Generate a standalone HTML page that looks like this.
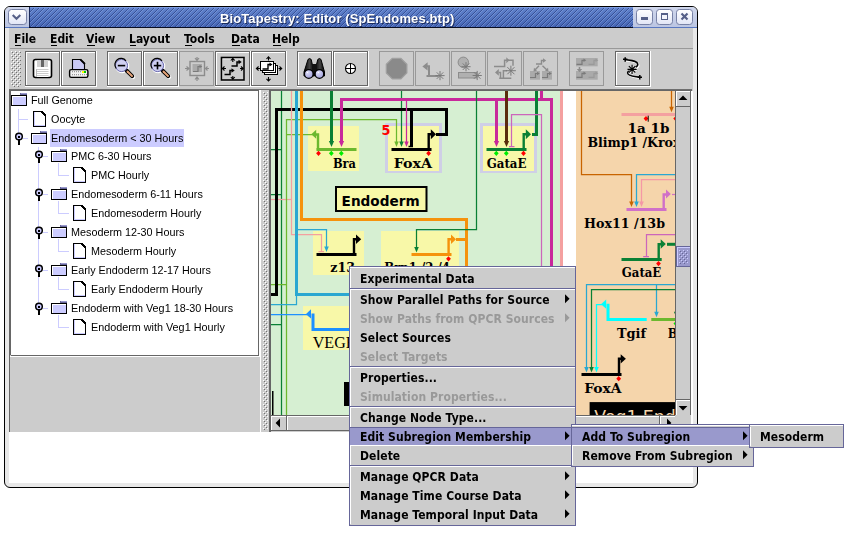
<!DOCTYPE html><html><head><meta charset="utf-8"><title>BioTapestry: Editor (SpEndomes.btp)</title><style>
html,body{margin:0;padding:0;background:#fff;}
body{width:858px;height:537px;overflow:hidden;position:relative;font-family:"Liberation Sans","DejaVu Sans",sans-serif;}
.abs{position:absolute;}
.menubar span,.tree span,.mi span,#ttext span{will-change:transform;}
#win{position:absolute;left:4px;top:6px;width:692px;height:480px;border:1px solid #000;border-radius:6px 6px 6px 6px;background:#e8e8e8;overflow:hidden;}
#content{position:absolute;left:4px;top:21px;width:684px;height:404px;background:#ccc;}
#below{position:absolute;left:4px;top:425px;width:684px;height:51px;background:#fff;}
#title{position:absolute;left:0;top:0;width:692px;height:20px;background:linear-gradient(#d0d7ec,#bcc6e2);}
#stripes{position:absolute;left:24px;top:0;width:603px;height:20px;background:linear-gradient(#6183cc,#4666b4);overflow:hidden;border-left:1px solid #1a2a5a;}
#titleline{position:absolute;left:0;top:20px;width:692px;height:1px;background:#5a78c0;}
#titleline2{position:absolute;left:24px;top:20px;width:604px;height:1px;background:#0a0f24;}
#ttext{position:absolute;left:0;top:0;width:692px;height:20px;color:#fff;font:bold 13px/15px "Liberation Sans",sans-serif;letter-spacing:0.1px;text-shadow:1px 1px 0 #1c2c5c;white-space:nowrap;}
.tbtn{position:absolute;top:2px;width:15px;height:14px;border:1px solid #7882a6;border-radius:3.5px;background:linear-gradient(#ffffff,#e2e6f6);}
.tbtn svg{position:absolute;left:0;top:0;}
.menubar span{position:absolute;top:31px;height:16px;font:bold 12px/16px "DejaVu Sans Condensed","DejaVu Sans",sans-serif;color:#000;white-space:nowrap;}
.menubar u{text-decoration:none;}
.menubar i{position:absolute;left:0;top:14px;height:1px;background:#000;}
.tb{position:absolute;top:51px;width:35px;height:35px;border:1px solid #666;box-shadow:1px 1px 0 #fff, inset 1px 1px 0 #fff;box-sizing:border-box;}
.tb.dis{border-color:#999;}
.tree span{position:absolute;height:19px;font:10.8px/19px "Liberation Sans",sans-serif;color:#000;white-space:nowrap;}
.menu{position:absolute;background:#ccc;border:1px solid #666699;box-sizing:border-box;}
.mi{position:absolute;left:0;height:19px;box-sizing:border-box;border-left:1px solid #fff;font:bold 12px "DejaVu Sans Condensed","DejaVu Sans",sans-serif;letter-spacing:0.08px;color:#000;white-space:nowrap;}
.mi span{position:absolute;left:8.5px;top:1px;line-height:19px;}
.mi.dis{color:#999;}
.mi.sel{background:#9999cc;border-left:0;border-top:1px solid #666699;border-bottom:1px solid #fff;}
.mi.sel span{left:9.5px;top:0px;}
.sep{position:absolute;left:0;height:2px;border-top:1px solid #666699;border-bottom:1px solid #fff;box-sizing:border-box;}
.arr{position:absolute;width:0;height:0;border-left:4.8px solid #000;border-top:4.8px solid transparent;border-bottom:4.8px solid transparent;}
.dis .arr{border-left-color:#999;}
</style></head><body>
<div id="win"><div id="title"></div><div id="stripes"><svg width="603" height="20" shape-rendering="crispEdges"><defs><pattern id="st" width="5" height="5" patternUnits="userSpaceOnUse"><rect x="4" y="0" width="1" height="1" fill="#16286a" fill-opacity="0.5"/><rect x="0" y="0" width="1" height="1" fill="#b0c8ff" fill-opacity="0.3"/><rect x="3" y="1" width="1" height="1" fill="#16286a" fill-opacity="0.5"/><rect x="4" y="1" width="1" height="1" fill="#b0c8ff" fill-opacity="0.3"/><rect x="2" y="2" width="1" height="1" fill="#16286a" fill-opacity="0.5"/><rect x="3" y="2" width="1" height="1" fill="#b0c8ff" fill-opacity="0.3"/><rect x="1" y="3" width="1" height="1" fill="#16286a" fill-opacity="0.5"/><rect x="2" y="3" width="1" height="1" fill="#b0c8ff" fill-opacity="0.3"/><rect x="0" y="4" width="1" height="1" fill="#16286a" fill-opacity="0.5"/><rect x="1" y="4" width="1" height="1" fill="#b0c8ff" fill-opacity="0.3"/></pattern></defs><rect width="603" height="20" fill="url(#st)"/><rect width="603" height="1" fill="#7c9be2"/></svg></div><div id="titleline"></div><div id="titleline2"></div><div id="ttext"><span style="position:absolute;left:215px;top:4px">BioTapestry: Editor (SpEndomes.btp)</span></div><div class="tbtn" style="left:3px;width:17px"><svg width="17" height="14"><path d="M3.7 5 L7.5 8.8 L11.3 5" stroke="#566088" stroke-width="2.1" fill="none"/></svg></div><div class="tbtn" style="left:631px"><svg width="15" height="14"><rect x="4" y="7" width="7" height="3" fill="#566088"/></svg></div><div class="tbtn" style="left:651px"><svg width="15" height="14"><rect x="4" y="3" width="7" height="7" fill="#566088"/><rect x="5" y="5" width="5" height="4" fill="#f4f5fc"/></svg></div><div class="tbtn" style="left:671px"><svg width="15" height="14"><path d="M4.5 3.5 L10.5 9.5 M10.5 3.5 L4.5 9.5" stroke="#566088" stroke-width="2.2" fill="none"/></svg></div><div id="content"></div><div id="below"></div></div>
<div class="abs" style="left:10px;top:48px;width:683px;height:1px;background:#999"></div>
<div class="menubar"><span style="left:14px;top:31px"><u>F</u>ile<i style="left:1px;top:14px;width:6px"></i></span><span style="left:50px;top:31px"><u>E</u>dit<i style="left:1px;top:14px;width:6px"></i></span><span style="left:86px;top:31px"><u>V</u>iew<i style="left:1px;top:14px;width:8px"></i></span><span style="left:129px;top:31px"><u>L</u>ayout<i style="left:1px;top:14px;width:6px"></i></span><span style="left:184px;top:31px"><u>T</u>ools<i style="left:1px;top:14px;width:7px"></i></span><span style="left:231px;top:31px"><u>D</u>ata<i style="left:1px;top:14px;width:8px"></i></span><span style="left:272px;top:31px"><u>H</u>elp<i style="left:1px;top:14px;width:8px"></i></span></div>
<div class="abs" style="left:26px;top:52px;width:33px;height:1px;background:#fff"></div><div class="abs" style="left:26px;top:52px;width:1px;height:33px;background:#fff"></div><div class="abs" style="left:60px;top:51px;width:1px;height:36px;background:#fff"></div><div class="abs" style="left:25px;top:86px;width:36px;height:1px;background:#fff"></div><div class="abs" style="left:25px;top:51px;width:33px;height:33px;border:1px solid #666"></div><svg class="abs" style="left:25px;top:51px" width="36" height="36"><rect x="8.5" y="8.5" width="18" height="18" rx="2" fill="#fff" stroke="#000" stroke-width="1.6"/><g shape-rendering="crispEdges"><rect x="12" y="9" width="11" height="7" fill="#d0d0d0"/><rect x="16" y="9" width="3" height="7" fill="#666"/></g><rect x="12" y="18.5" width="11.5" height="7.5" fill="#fff"/><path d="M12 18.5H23.5M12 20.5H23.5M12 22.5H23.5M12 24.5H23.5" stroke="#ccc" stroke-width="1"/><path d="M11.5 18V26" stroke="#bbb" stroke-width="1"/></svg><div class="abs" style="left:62px;top:52px;width:33px;height:1px;background:#fff"></div><div class="abs" style="left:62px;top:52px;width:1px;height:33px;background:#fff"></div><div class="abs" style="left:96px;top:51px;width:1px;height:36px;background:#fff"></div><div class="abs" style="left:61px;top:86px;width:36px;height:1px;background:#fff"></div><div class="abs" style="left:61px;top:51px;width:33px;height:33px;border:1px solid #666"></div><svg class="abs" style="left:61px;top:51px" width="36" height="36"><path d="M11.5 18.5V8.5H19.5L23.5 12.5V18.5Z" fill="#cacaf4" stroke="#000" stroke-width="1.1"/><path d="M19.3 8.3L23.9 13" stroke="#000" stroke-width="1.8"/><rect x="8.6" y="18.6" width="18.3" height="7.8" rx="1.6" fill="#f2f2f2" stroke="#000" stroke-width="1.4"/><path d="M10.5 20.5H20.5M10.5 23.5H25.5" stroke="#9a9a9a" stroke-width="1" stroke-dasharray="1 1" shape-rendering="crispEdges"/><path d="M11 21.5H20M11 24.5H25" stroke="#d8d8d8" stroke-width="1" stroke-dasharray="1 1" shape-rendering="crispEdges"/><rect x="21" y="20" width="2" height="2" fill="#ffff00" shape-rendering="crispEdges"/><rect x="23" y="20" width="2" height="2" fill="#00cc00" shape-rendering="crispEdges"/></svg><div class="abs" style="left:108px;top:52px;width:33px;height:1px;background:#fff"></div><div class="abs" style="left:108px;top:52px;width:1px;height:33px;background:#fff"></div><div class="abs" style="left:142px;top:51px;width:1px;height:36px;background:#fff"></div><div class="abs" style="left:107px;top:86px;width:36px;height:1px;background:#fff"></div><div class="abs" style="left:107px;top:51px;width:33px;height:33px;border:1px solid #666"></div><svg class="abs" style="left:107px;top:51px" width="36" height="36"><path d="M20 20L25.3 25.3" stroke="#fff" stroke-width="4.2" stroke-linecap="round" transform="translate(0.8,0.8)"/><circle cx="15.2" cy="15.2" r="6.3" fill="none" stroke="#fff" stroke-width="1.5"/><path d="M19.5 19.5L25.2 25.2" stroke="#000" stroke-width="4" stroke-linecap="round"/><path d="M20.5 20.5L25 25" stroke="#e6a47a" stroke-width="1.9" stroke-linecap="round"/><circle cx="14.5" cy="14.5" r="6.1" fill="#cfcff0" stroke="#5a5aa8" stroke-width="0.9"/><path d="M9.2 17.5A6.1 6.1 0 0 1 19 9.8" fill="none" stroke="#000" stroke-width="1.2"/><rect x="10.8" y="13.8" width="7.4" height="1.6" fill="#000"/></svg><div class="abs" style="left:144px;top:52px;width:33px;height:1px;background:#fff"></div><div class="abs" style="left:144px;top:52px;width:1px;height:33px;background:#fff"></div><div class="abs" style="left:178px;top:51px;width:1px;height:36px;background:#fff"></div><div class="abs" style="left:143px;top:86px;width:36px;height:1px;background:#fff"></div><div class="abs" style="left:143px;top:51px;width:33px;height:33px;border:1px solid #666"></div><svg class="abs" style="left:143px;top:51px" width="36" height="36"><path d="M20 20L25.3 25.3" stroke="#fff" stroke-width="4.2" stroke-linecap="round" transform="translate(0.8,0.8)"/><circle cx="15.2" cy="15.2" r="6.3" fill="none" stroke="#fff" stroke-width="1.5"/><path d="M19.5 19.5L25.2 25.2" stroke="#000" stroke-width="4" stroke-linecap="round"/><path d="M20.5 20.5L25 25" stroke="#e6a47a" stroke-width="1.9" stroke-linecap="round"/><circle cx="14.5" cy="14.5" r="6.1" fill="#cfcff0" stroke="#5a5aa8" stroke-width="0.9"/><path d="M9.2 17.5A6.1 6.1 0 0 1 19 9.8" fill="none" stroke="#000" stroke-width="1.2"/><rect x="10.8" y="13.8" width="7.4" height="1.6" fill="#000"/><rect x="13.7" y="10.8" width="1.6" height="7.6" fill="#000"/></svg><div class="abs" style="left:179px;top:51px;width:33px;height:33px;border:1px solid #999"></div><svg class="abs" style="left:179px;top:51px" width="36" height="36"><rect x="11" y="10.5" width="14.5" height="14" fill="none" stroke="#8c8c8c" stroke-width="1.4"/><rect x="13.5" y="13" width="9.5" height="8" fill="#aaa"/><path d="M14 20.5H19V15.5H21" stroke="#7a7a7a" stroke-width="1.2" fill="none"/><polygon points="20.5,13.7 23.3,15.5 20.5,17.3" fill="#7a7a7a"/><path d="M18 6V9.5M16 7L18 9.5L20 7 M18 30V26M16 28.5L18 26L20 28.5 M6 17.5H10M7.5 15.5L10 17.5L7.5 19.5 M30 17.5H26.5M28.5 15.5L26.5 17.5L28.5 19.5" stroke="#8c8c8c" stroke-width="1.2" fill="none"/></svg><div class="abs" style="left:216px;top:52px;width:33px;height:1px;background:#fff"></div><div class="abs" style="left:216px;top:52px;width:1px;height:33px;background:#fff"></div><div class="abs" style="left:250px;top:51px;width:1px;height:36px;background:#fff"></div><div class="abs" style="left:215px;top:86px;width:36px;height:1px;background:#fff"></div><div class="abs" style="left:215px;top:51px;width:33px;height:33px;border:1px solid #666"></div><svg class="abs" style="left:215px;top:51px" width="36" height="36"><rect x="7" y="7.5" width="22" height="22" fill="none" stroke="#fff" stroke-width="1.5"/><rect x="6.5" y="6.5" width="22.5" height="22.5" fill="none" stroke="#000" stroke-width="1.6"/><path d="M16.5 15H22.0V11H24.0" stroke="#000" stroke-width="1.5" fill="none"/><polygon points="23.5,8.8 26.7,11 23.5,13.2" fill="#000"/><path d="M9.5 23.5H15.0V19.5H17.0" stroke="#000" stroke-width="1.5" fill="none"/><polygon points="16.5,17.3 19.7,19.5 16.5,21.7" fill="#000"/><path d="M17.8 11V7.5M15.8 9.5L17.8 7.3L19.8 9.5 M17.8 25V28M15.8 26L17.8 28.2L19.8 26 M11 17.5H7.5M9.5 15.5L7.3 17.5L9.5 19.5 M25 17.5H28M26 15.5L28.2 17.5L26 19.5" stroke="#000" stroke-width="1.1" fill="none"/></svg><div class="abs" style="left:252px;top:52px;width:33px;height:1px;background:#fff"></div><div class="abs" style="left:252px;top:52px;width:1px;height:33px;background:#fff"></div><div class="abs" style="left:286px;top:51px;width:1px;height:36px;background:#fff"></div><div class="abs" style="left:251px;top:86px;width:36px;height:1px;background:#fff"></div><div class="abs" style="left:251px;top:51px;width:33px;height:33px;border:1px solid #666"></div><svg class="abs" style="left:251px;top:51px" width="36" height="36"><g shape-rendering="crispEdges"><rect x="13.5" y="14.5" width="13" height="9" fill="#fff" stroke="#000" stroke-width="1"/><rect x="11.5" y="12.5" width="13" height="9" fill="#fff" stroke="#000" stroke-width="1"/><rect x="9.5" y="10.5" width="13" height="9" fill="#fff" stroke="#000" stroke-width="1"/></g><path d="M11.5 18H17.0V13.5H19.0" stroke="#000" stroke-width="1.4" fill="none"/><polygon points="18.5,11.5 21.5,13.5 18.5,15.5" fill="#000"/><path d="M17.5 9.5V6M15.5 8L17.5 5.8L19.5 8 M17.5 26V29.5M15.5 27.8L17.5 30L19.5 27.8 M9 17.5H5.5M7.6 15.5L5.4 17.5L7.6 19.5 M27.5 17.5H30.5M28.5 15.5L30.7 17.5L28.5 19.5" stroke="#000" stroke-width="1.1" fill="none"/></svg><div class="abs" style="left:298px;top:52px;width:33px;height:1px;background:#fff"></div><div class="abs" style="left:298px;top:52px;width:1px;height:33px;background:#fff"></div><div class="abs" style="left:332px;top:51px;width:1px;height:36px;background:#fff"></div><div class="abs" style="left:297px;top:86px;width:36px;height:1px;background:#fff"></div><div class="abs" style="left:297px;top:51px;width:33px;height:33px;border:1px solid #666"></div><svg class="abs" style="left:297px;top:51px" width="36" height="36"><defs><linearGradient id="bn" x1="0" x2="1"><stop offset="0" stop-color="#000"/><stop offset="0.55" stop-color="#444"/><stop offset="1" stop-color="#000"/></linearGradient><radialGradient id="ln" cx="0.35" cy="0.3" r="0.8"><stop offset="0" stop-color="#e0e0fa"/><stop offset="1" stop-color="#9c9cd8"/></radialGradient></defs><path d="M11 8.5Q12.6 6.5 14.2 8.5L17 21V25H7V21Z" fill="url(#bn)" stroke="#000" stroke-width="1"/><path d="M20.8 8.5Q22.4 6.5 24 8.5L27.5 21V25H17.5V21Z" fill="url(#bn)" stroke="#000" stroke-width="1"/><rect x="15" y="13" width="5" height="9" fill="#111"/><circle cx="11.8" cy="23" r="4.3" fill="url(#ln)" stroke="#000" stroke-width="1.2"/><circle cx="22.4" cy="23" r="4.3" fill="url(#ln)" stroke="#000" stroke-width="1.2"/><rect x="10" y="21" width="1" height="1" fill="#fff"/><rect x="21" y="21" width="1" height="1" fill="#fff"/></svg><div class="abs" style="left:334px;top:52px;width:33px;height:1px;background:#fff"></div><div class="abs" style="left:334px;top:52px;width:1px;height:33px;background:#fff"></div><div class="abs" style="left:368px;top:51px;width:1px;height:36px;background:#fff"></div><div class="abs" style="left:333px;top:86px;width:36px;height:1px;background:#fff"></div><div class="abs" style="left:333px;top:51px;width:33px;height:33px;border:1px solid #666"></div><svg class="abs" style="left:333px;top:51px" width="36" height="36"><circle cx="17.5" cy="17.5" r="5" fill="#fff" stroke="#000" stroke-width="1.1"/><path d="M12.5 17.5H22.5M17.5 12.5V22.5" stroke="#000" stroke-width="1"/></svg><div class="abs" style="left:379px;top:51px;width:33px;height:33px;border:1px solid #999"></div><svg class="abs" style="left:379px;top:51px" width="36" height="36"><polygon points="27.9,21.9 21.9,27.9 13.3,27.9 7.3,21.9 7.3,13.3 13.3,7.3 21.9,7.3 27.9,13.3" fill="#8a8a8a" stroke="#a0a0a0" stroke-width="1.2"/></svg><div class="abs" style="left:415px;top:51px;width:33px;height:33px;border:1px solid #999"></div><svg class="abs" style="left:415px;top:51px" width="36" height="36"><path d="M11.5 25H23.5M14 25V15.3H12" stroke="#8c8c8c" stroke-width="2" fill="none"/><polygon points="7.4,15.4 12.6,11.2 12.6,19.6" fill="#8c8c8c"/><path d="M20.40 24.60L29.60 24.60M21.75 21.35L28.25 27.85M25.00 20.00L25.00 29.20M28.25 21.35L21.75 27.85" stroke="#7a7a7a" stroke-width="1" fill="none"/></svg><div class="abs" style="left:451px;top:51px;width:33px;height:33px;border:1px solid #999"></div><svg class="abs" style="left:451px;top:51px" width="36" height="36"><circle cx="12.3" cy="11.3" r="5.2" fill="#b0b0b0" stroke="#8c8c8c" stroke-width="1"/><rect x="7.5" y="21.5" width="18" height="5.5" fill="#b0b0b0" stroke="#8c8c8c" stroke-width="1"/><path d="M10.40 15.70L19.60 15.70M11.75 12.45L18.25 18.95M15.00 11.10L15.00 20.30M18.25 12.45L11.75 18.95" stroke="#7a7a7a" stroke-width="1" fill="none"/><path d="M21.60 24.50L30.80 24.50M22.95 21.25L29.45 27.75M26.20 19.90L26.20 29.10M29.45 21.25L22.95 27.75" stroke="#7a7a7a" stroke-width="1" fill="none"/></svg><div class="abs" style="left:487px;top:51px;width:33px;height:33px;border:1px solid #999"></div><svg class="abs" style="left:487px;top:51px" width="36" height="36"><path d="M7 15.5H17.6V9.3H26V14.8 M12 21.4H13.5V27.3 M12.2 27.3H24.3 M16.4 27.3V19.7H20" stroke="#8c8c8c" stroke-width="1.5" fill="none"/><polygon points="19.3,6.3 22.4,9.3 19.3,12.3" fill="#8c8c8c"/><polygon points="8,21.4 11.8,18 11.8,24.8" fill="#8c8c8c"/><path d="M18.90 19.70L28.90 19.70M20.36 16.16L27.44 23.24M23.90 14.70L23.90 24.70M27.44 16.16L20.36 23.24" stroke="#7a7a7a" stroke-width="1" fill="none"/></svg><div class="abs" style="left:523px;top:51px;width:33px;height:33px;border:1px solid #999"></div><svg class="abs" style="left:523px;top:51px" width="36" height="36"><rect x="7" y="20" width="10" height="8.7" fill="#aaa"/><rect x="19" y="20" width="10" height="8.7" fill="#aaa"/><path d="M13 13H18.5V9.5H20.5" stroke="#8c8c8c" stroke-width="1.4" fill="none"/><polygon points="20.0,7.3 23.2,9.5 20.0,11.7" fill="#8c8c8c"/><path d="M7 26.5H12.5V22.5H14.5" stroke="#7a7a7a" stroke-width="1.2" fill="none"/><polygon points="14.0,20.7 16.8,22.5 14.0,24.3" fill="#7a7a7a"/><path d="M19 26.5H24.5V22.5H26.5" stroke="#7a7a7a" stroke-width="1.2" fill="none"/><polygon points="26.0,20.7 28.8,22.5 26.0,24.3" fill="#7a7a7a"/><path d="M16 14.8L11.5 19.5M19.5 14.8L24.5 19.5" stroke="#8c8c8c" stroke-width="1.4"/><polygon points="10.5,20.5 11,16.8 14,19.8" fill="#8c8c8c"/><polygon points="25.5,20.5 25,16.8 22,19.8" fill="#8c8c8c"/></svg><div class="abs" style="left:569px;top:51px;width:33px;height:33px;border:1px solid #999"></div><svg class="abs" style="left:569px;top:51px" width="36" height="36"><rect x="7" y="7" width="21.7" height="8.3" fill="#aaa"/><rect x="7" y="20" width="21.7" height="8.7" fill="#aaa"/><path d="M7.5 13.3H13.0V9.3H15.0" stroke="#7a7a7a" stroke-width="1.2" fill="none"/><polygon points="14.5,7.500000000000001 17.3,9.3 14.5,11.100000000000001" fill="#7a7a7a"/><path d="M19.5 13.3H25.0V9.3H27.0" stroke="#999" stroke-width="1.2" fill="none"/><polygon points="26.5,7.500000000000001 29.3,9.3 26.5,11.100000000000001" fill="#999"/><path d="M7.5 26.3H13.0V22.3H15.0" stroke="#7a7a7a" stroke-width="1.2" fill="none"/><polygon points="14.5,20.5 17.3,22.3 14.5,24.1" fill="#7a7a7a"/><path d="M19.5 26.3H25.0V22.3H27.0" stroke="#999" stroke-width="1.2" fill="none"/><polygon points="26.5,20.5 29.3,22.3 26.5,24.1" fill="#999"/><path d="M10.5 16V19" stroke="#8c8c8c" stroke-width="1.6"/><polygon points="7.8,18 13.2,18 10.5,21.3" fill="#8c8c8c"/></svg><div class="abs" style="left:616px;top:52px;width:33px;height:1px;background:#fff"></div><div class="abs" style="left:616px;top:52px;width:1px;height:33px;background:#fff"></div><div class="abs" style="left:650px;top:51px;width:1px;height:36px;background:#fff"></div><div class="abs" style="left:615px;top:86px;width:36px;height:1px;background:#fff"></div><div class="abs" style="left:615px;top:51px;width:33px;height:33px;border:1px solid #666"></div><svg class="abs" style="left:615px;top:51px" width="36" height="36"><path d="M10 8.6C16 9.5 22.5 9.5 22.8 13.5C23 17.5 12.3 17.8 12.6 22C13 25.5 20 25.3 24.8 26.3" stroke="#fff" stroke-width="1.6" fill="none" transform="translate(1,1)"/><path d="M10 8.6C16 9.5 22.5 9.5 22.8 13.5C23 17.5 12.3 17.8 12.6 22C13 25.5 20 25.3 24.8 26.3" stroke="#000" stroke-width="1.5" fill="none"/><path d="M8 8.2H12.4M10.2 6.2V10.8M22.6 26.2H27M24.8 24V28.5" stroke="#000" stroke-width="1.5"/><path d="M13.20 19.00L22.00 19.00M14.49 15.89L20.71 22.11M17.60 14.60L17.60 23.40M20.71 15.89L14.49 22.11" stroke="#fff" stroke-width="1.2" fill="none"/><path d="M12.50 18.40L21.70 18.40M13.85 15.15L20.35 21.65M17.10 13.80L17.10 23.00M20.35 15.15L13.85 21.65" stroke="#000" stroke-width="1.15" fill="none"/></svg>
<div class="abs" style="left:9px;top:90px;width:1px;height:342px;background:#666"></div><div class="abs" style="left:9px;top:89px;width:683px;height:1px;background:#6e6e6e"></div><div class="abs" style="left:10px;top:90px;width:249px;height:266px;background:#666"></div><div class="abs" style="left:11px;top:91px;width:247px;height:264px;background:#fff"></div><div class="abs" style="left:259px;top:90px;width:1px;height:267px;background:#fff"></div><div class="abs" style="left:260px;top:90px;width:1px;height:342px;background:#fff"></div><div class="abs" style="left:10px;top:356px;width:250px;height:1px;background:#fff"></div><div class="abs" style="left:10px;top:355px;width:1px;height:1px;background:#ccc"></div><svg class="abs" style="left:263px;top:92px" width="5" height="338" shape-rendering="crispEdges"><defs><pattern id="bd" width="4" height="4" patternUnits="userSpaceOnUse"><rect x="0" y="0" width="1" height="1" fill="#fff"/><rect x="1" y="1" width="1" height="1" fill="#707070"/><rect x="2" y="2" width="1" height="1" fill="#fff"/><rect x="3" y="3" width="1" height="1" fill="#707070"/></pattern></defs><rect width="5" height="338" fill="url(#bd)"/></svg><svg class="abs" style="left:11px;top:51px" width="10" height="36" shape-rendering="crispEdges"><defs><pattern id="bg" width="4" height="4" patternUnits="userSpaceOnUse"><rect x="0" y="0" width="1" height="1" fill="#fff"/><rect x="1" y="1" width="1" height="1" fill="#707070"/><rect x="2" y="2" width="1" height="1" fill="#fff"/><rect x="3" y="3" width="1" height="1" fill="#707070"/></pattern></defs><rect width="10" height="36" fill="url(#bg)"/></svg><div class="abs" style="left:269px;top:90px;width:1px;height:342px;background:#666"></div><div class="abs" style="left:270px;top:90px;width:422px;height:342px;background:#666"></div><div class="abs" style="left:271px;top:91px;width:422px;height:341px;background:#ccc"></div><div class="abs" style="left:691px;top:91px;width:2px;height:341px;background:#fff"></div>
<svg class="abs" style="left:0;top:0" width="270" height="360" shape-rendering="crispEdges"><rect x="18" y="109" width="1" height="24" fill="#ccccff"/><rect x="18" y="119" width="10" height="1" fill="#ccccff"/><rect x="38" y="147" width="1" height="156" fill="#ccccff"/><rect x="20" y="93" width="7" height="3" fill="#666699"/><rect x="21" y="93" width="6" height="1" fill="#9999cc"/><rect x="11.5" y="95.5" width="15" height="10" fill="#ccccff" stroke="#000" stroke-width="1"/><rect x="12" y="96" width="14" height="1" fill="#fff"/><rect x="12" y="96" width="1" height="9" fill="#fff"/><path d="M33.5 111.5 H41.5 L45.5 115.5 V126.5 H33.5 Z" fill="#fff" stroke="#000" stroke-width="1"/><path d="M41.5 111.5 L45.5 115.5" stroke="#000" stroke-width="2" fill="none"/><rect x="34" y="112" width="1" height="14" fill="#ccccff"/><rect x="34" y="125" width="11" height="1" fill="#ccccff"/><rect x="50" y="129" width="134" height="18" fill="#ccccff"/><rect x="23" y="138" width="5" height="1" fill="#ccccff"/><circle cx="19" cy="136.5" r="3.3" fill="#ccccff" stroke="#000" stroke-width="1.5" shape-rendering="auto"/><rect x="18" y="135.5" width="2" height="2" fill="#000"/><rect x="18" y="140" width="2" height="5" fill="#000"/><rect x="40" y="131" width="7" height="3" fill="#666699"/><rect x="41" y="131" width="6" height="1" fill="#9999cc"/><rect x="31.5" y="133.5" width="15" height="10" fill="#ccccff" stroke="#000" stroke-width="1"/><rect x="32" y="134" width="14" height="1" fill="#fff"/><rect x="32" y="134" width="1" height="9" fill="#fff"/><rect x="43" y="156" width="5" height="1" fill="#ccccff"/><circle cx="39" cy="154.5" r="3.3" fill="#ccccff" stroke="#000" stroke-width="1.5" shape-rendering="auto"/><rect x="38" y="153.5" width="2" height="2" fill="#000"/><rect x="38" y="158" width="2" height="5" fill="#000"/><rect x="60" y="149" width="7" height="3" fill="#666699"/><rect x="61" y="149" width="6" height="1" fill="#9999cc"/><rect x="51.5" y="151.5" width="15" height="10" fill="#ccccff" stroke="#000" stroke-width="1"/><rect x="52" y="152" width="14" height="1" fill="#fff"/><rect x="52" y="152" width="1" height="9" fill="#fff"/><rect x="58" y="163" width="1" height="13" fill="#ccccff"/><rect x="58" y="175" width="11" height="1" fill="#ccccff"/><path d="M73.5 167.5 H81.5 L85.5 171.5 V182.5 H73.5 Z" fill="#fff" stroke="#000" stroke-width="1"/><path d="M81.5 167.5 L85.5 171.5" stroke="#000" stroke-width="2" fill="none"/><rect x="74" y="168" width="1" height="14" fill="#ccccff"/><rect x="74" y="181" width="11" height="1" fill="#ccccff"/><rect x="43" y="194" width="5" height="1" fill="#ccccff"/><circle cx="39" cy="192.5" r="3.3" fill="#ccccff" stroke="#000" stroke-width="1.5" shape-rendering="auto"/><rect x="38" y="191.5" width="2" height="2" fill="#000"/><rect x="38" y="196" width="2" height="5" fill="#000"/><rect x="60" y="187" width="7" height="3" fill="#666699"/><rect x="61" y="187" width="6" height="1" fill="#9999cc"/><rect x="51.5" y="189.5" width="15" height="10" fill="#ccccff" stroke="#000" stroke-width="1"/><rect x="52" y="190" width="14" height="1" fill="#fff"/><rect x="52" y="190" width="1" height="9" fill="#fff"/><rect x="58" y="201" width="1" height="13" fill="#ccccff"/><rect x="58" y="213" width="11" height="1" fill="#ccccff"/><path d="M73.5 205.5 H81.5 L85.5 209.5 V220.5 H73.5 Z" fill="#fff" stroke="#000" stroke-width="1"/><path d="M81.5 205.5 L85.5 209.5" stroke="#000" stroke-width="2" fill="none"/><rect x="74" y="206" width="1" height="14" fill="#ccccff"/><rect x="74" y="219" width="11" height="1" fill="#ccccff"/><rect x="43" y="232" width="5" height="1" fill="#ccccff"/><circle cx="39" cy="230.5" r="3.3" fill="#ccccff" stroke="#000" stroke-width="1.5" shape-rendering="auto"/><rect x="38" y="229.5" width="2" height="2" fill="#000"/><rect x="38" y="234" width="2" height="5" fill="#000"/><rect x="60" y="225" width="7" height="3" fill="#666699"/><rect x="61" y="225" width="6" height="1" fill="#9999cc"/><rect x="51.5" y="227.5" width="15" height="10" fill="#ccccff" stroke="#000" stroke-width="1"/><rect x="52" y="228" width="14" height="1" fill="#fff"/><rect x="52" y="228" width="1" height="9" fill="#fff"/><rect x="58" y="239" width="1" height="13" fill="#ccccff"/><rect x="58" y="251" width="11" height="1" fill="#ccccff"/><path d="M73.5 243.5 H81.5 L85.5 247.5 V258.5 H73.5 Z" fill="#fff" stroke="#000" stroke-width="1"/><path d="M81.5 243.5 L85.5 247.5" stroke="#000" stroke-width="2" fill="none"/><rect x="74" y="244" width="1" height="14" fill="#ccccff"/><rect x="74" y="257" width="11" height="1" fill="#ccccff"/><rect x="43" y="270" width="5" height="1" fill="#ccccff"/><circle cx="39" cy="268.5" r="3.3" fill="#ccccff" stroke="#000" stroke-width="1.5" shape-rendering="auto"/><rect x="38" y="267.5" width="2" height="2" fill="#000"/><rect x="38" y="272" width="2" height="5" fill="#000"/><rect x="60" y="263" width="7" height="3" fill="#666699"/><rect x="61" y="263" width="6" height="1" fill="#9999cc"/><rect x="51.5" y="265.5" width="15" height="10" fill="#ccccff" stroke="#000" stroke-width="1"/><rect x="52" y="266" width="14" height="1" fill="#fff"/><rect x="52" y="266" width="1" height="9" fill="#fff"/><rect x="58" y="277" width="1" height="13" fill="#ccccff"/><rect x="58" y="289" width="11" height="1" fill="#ccccff"/><path d="M73.5 281.5 H81.5 L85.5 285.5 V296.5 H73.5 Z" fill="#fff" stroke="#000" stroke-width="1"/><path d="M81.5 281.5 L85.5 285.5" stroke="#000" stroke-width="2" fill="none"/><rect x="74" y="282" width="1" height="14" fill="#ccccff"/><rect x="74" y="295" width="11" height="1" fill="#ccccff"/><rect x="43" y="308" width="5" height="1" fill="#ccccff"/><circle cx="39" cy="306.5" r="3.3" fill="#ccccff" stroke="#000" stroke-width="1.5" shape-rendering="auto"/><rect x="38" y="305.5" width="2" height="2" fill="#000"/><rect x="38" y="310" width="2" height="5" fill="#000"/><rect x="60" y="301" width="7" height="3" fill="#666699"/><rect x="61" y="301" width="6" height="1" fill="#9999cc"/><rect x="51.5" y="303.5" width="15" height="10" fill="#ccccff" stroke="#000" stroke-width="1"/><rect x="52" y="304" width="14" height="1" fill="#fff"/><rect x="52" y="304" width="1" height="9" fill="#fff"/><rect x="58" y="315" width="1" height="13" fill="#ccccff"/><rect x="58" y="327" width="11" height="1" fill="#ccccff"/><path d="M73.5 319.5 H81.5 L85.5 323.5 V334.5 H73.5 Z" fill="#fff" stroke="#000" stroke-width="1"/><path d="M81.5 319.5 L85.5 323.5" stroke="#000" stroke-width="2" fill="none"/><rect x="74" y="320" width="1" height="14" fill="#ccccff"/><rect x="74" y="333" width="11" height="1" fill="#ccccff"/></svg><div class="tree"><span style="left:31px;top:91px">Full Genome</span><span style="left:51px;top:110px">Oocyte</span><span style="left:51px;top:129px">Endomesoderm &lt; 30 Hours</span><span style="left:71px;top:147px">PMC 6-30 Hours</span><span style="left:91px;top:166px">PMC Hourly</span><span style="left:71px;top:185px">Endomesoderm 6-11 Hours</span><span style="left:91px;top:204px">Endomesoderm Hourly</span><span style="left:71px;top:223px">Mesoderm 12-30 Hours</span><span style="left:91px;top:242px">Mesoderm Hourly</span><span style="left:71px;top:261px">Early Endoderm 12-17 Hours</span><span style="left:91px;top:280px">Early Endoderm Hourly</span><span style="left:71px;top:299px">Endoderm with Veg1 18-30 Hours</span><span style="left:91px;top:318px">Endoderm with Veg1 Hourly</span></div>
<svg class="abs" style="left:271px;top:91px" width="404" height="324" viewBox="271 91 404 324"><rect x="271" y="91" width="289" height="324" fill="#d6efd2"/><rect x="560" y="91" width="3" height="324" fill="#f4a0a0"/><rect x="563" y="91" width="13" height="324" fill="#fff"/><rect x="576" y="91" width="100" height="324" fill="#f5d5ab"/><rect x="308" y="126" width="51" height="45" fill="#f8f8a8"/><rect x="385" y="123" width="57" height="50" fill="#cfcfe6"/><rect x="388" y="126" width="51" height="45" fill="#f8f8a8"/><rect x="480" y="123" width="57" height="50" fill="#cfcfe6"/><rect x="483" y="126" width="51" height="45" fill="#f8f8a8"/><rect x="313" y="231" width="51" height="44" fill="#f8f8a8"/><rect x="381" y="231" width="78" height="44" fill="#f8f8a8"/><rect x="303" y="306" width="60" height="44" fill="#f8f8a8"/><path d="M281.5 91V415 M271 149.5H282 M271 194.5H282 M271 324.5H282" stroke="#0a8035" stroke-width="1.25" fill="none"/><path d="M271 199.5H292" stroke="#f4a0a0" stroke-width="1.25" fill="none"/><path d="M286.5 415V119.5H396.5V142 M286 134.5H313 M271 284.5H287" stroke="#6cb82e" stroke-width="1.25" fill="none"/><path d="M401.5 91V142" stroke="#0a8035" stroke-width="1.25" fill="none"/><path d="M271 294.5H276.5V109.5H446.5V134.5H436 M411.5 109V147" stroke="#000" stroke-width="3" fill="none"/><path d="M408.5 146.5H413" stroke="#000" stroke-width="1.5" fill="none"/><path d="M291.5 91V234.5H321.5V252 M318.5 251.5H324" stroke="#f4a0a0" stroke-width="1.25" fill="none"/><path d="M296.5 91V294.5H360" stroke="#2aa7d1" stroke-width="3" fill="none"/><path d="M297 229.5H326.5V247 M296.5 295V304.5H271" stroke="#2aa7d1" stroke-width="1.25" fill="none"/><path d="M301.5 91V219.5H466.5V270 M456 239.5H467" stroke="#f5920c" stroke-width="3" fill="none"/><path d="M331.5 91V142" stroke="#0a8035" stroke-width="3" fill="none"/><path d="M341.5 142V99.5H551.5V270 M496.5 99V142 M541.5 91V100" stroke="#c8299b" stroke-width="3" fill="none"/><path d="M406.5 100V142" stroke="#c8299b" stroke-width="1.25" fill="none"/><path d="M476.5 91V229.5H416.5V247" stroke="#0a8035" stroke-width="1.25" fill="none"/><path d="M506.5 91V142" stroke="#5a2d0c" stroke-width="3" fill="none"/><path d="M536.5 91V134.5H532" stroke="#0a8035" stroke-width="3" fill="none"/><path d="M511.5 146V114.5H541.5V270 M509 146.5H514.5" stroke="#cc66bb" stroke-width="1.25" fill="none"/><polygon points="328.9,141 334.1,141 331.5,147" fill="#0a8035"/><polygon points="338.9,141 344.1,141 341.5,147" fill="#c8299b"/><polygon points="394.3,141.5 398.7,141.5 396.5,147" fill="#6cb82e"/><polygon points="399.3,141.5 403.7,141.5 401.5,147" fill="#0a8035"/><polygon points="404.3,141.5 408.7,141.5 406.5,147" fill="#c8299b"/><polygon points="493.9,141 499.1,141 496.5,147" fill="#c8299b"/><polygon points="503.9,141 509.1,141 506.5,147" fill="#5a2d0c"/><polygon points="324.2,246.5 328.8,246.5 326.5,252" fill="#2aa7d1"/><polygon points="414.2,247.0 418.8,247.0 416.5,252.5" fill="#0a8035"/><path d="M316.5 149.5H356.5" stroke="#6cb82e" stroke-width="3" fill="none"/><path d="M318 150V134.5H314" stroke="#6cb82e" stroke-width="2.4" fill="none"/><polygon points="311.3,134.3 316.2,129.8 316.2,138.7" fill="#6cb82e"/><polygon points="318.5,150.70000000000002 320.9,153.3 318.5,155.9 316.1,153.3" fill="#ff0000"/><polygon points="331.3,150.70000000000002 333.7,153.3 331.3,155.9 328.90000000000003,153.3" fill="#00ee00"/><polygon points="341.3,150.70000000000002 343.7,153.3 341.3,155.9 338.90000000000003,153.3" fill="#00ee00"/><text x="333" y="168" font-family='"DejaVu Serif","Liberation Serif",serif' font-size="13" font-weight="bold" fill="#000" textLength="23" lengthAdjust="spacingAndGlyphs">Bra</text><path d="M391.5 149.5H431.5" stroke="#000" stroke-width="3" fill="none"/><path d="M428.7 149V134.3H432" stroke="#000" stroke-width="2.4" fill="none"/><polygon points="436,134.3 430.8,129.3 430.8,139.3" fill="#000"/><polygon points="428.6,150.70000000000002 431.0,153.3 428.6,155.9 426.20000000000005,153.3" fill="#ff0000"/><text x="393.7" y="168" font-family='"DejaVu Serif","Liberation Serif",serif' font-size="13" font-weight="bold" fill="#000" textLength="38.3" lengthAdjust="spacingAndGlyphs">FoxA</text><text x="381.6" y="135.4" font-family='"DejaVu Sans Condensed","DejaVu Sans",sans-serif' font-size="14.2" font-weight="bold" fill="#ff0000">5</text><path d="M486.5 149.5H526.5" stroke="#0a8035" stroke-width="3" fill="none"/><path d="M523.7 149V134.3H527" stroke="#0a8035" stroke-width="2.4" fill="none"/><polygon points="531,134.3 525.8,129.3 525.8,139.3" fill="#0a8035"/><polygon points="496.3,150.70000000000002 498.7,153.3 496.3,155.9 493.90000000000003,153.3" fill="#00ee00"/><polygon points="506.3,150.70000000000002 508.7,153.3 506.3,155.9 503.90000000000003,153.3" fill="#00ee00"/><polygon points="523.5,150.70000000000002 525.9,153.3 523.5,155.9 521.1,153.3" fill="#ff0000"/><text x="486.7" y="168" font-family='"DejaVu Serif","Liberation Serif",serif' font-size="13" font-weight="bold" fill="#000" textLength="39.8" lengthAdjust="spacingAndGlyphs">GataE</text><rect x="336" y="187" width="90.5" height="24" fill="#f8f8a8" stroke="#000" stroke-width="2"/><text x="341.6" y="205.8" font-family='"DejaVu Sans","Liberation Sans",sans-serif' font-size="14.6" font-weight="bold" fill="#000" textLength="78" lengthAdjust="spacingAndGlyphs">Endoderm</text><path d="M316.5 254.5H356.5" stroke="#000" stroke-width="3" fill="none"/><path d="M354 254V239.3H357" stroke="#000" stroke-width="2.4" fill="none"/><polygon points="361.2,239.2 356,234.4 356,244" fill="#000"/><text x="330.3" y="272.4" font-family='"DejaVu Serif","Liberation Serif",serif' font-size="13" font-weight="bold" fill="#000" textLength="24.7" lengthAdjust="spacingAndGlyphs">z13</text><path d="M411.5 254.5H451.5" stroke="#f5920c" stroke-width="3" fill="none"/><path d="M448.6 254V239.3H452" stroke="#f5920c" stroke-width="2.4" fill="none"/><polygon points="456,239.2 451,234.4 451,244" fill="#f5920c"/><polygon points="448.5,256.2 450.9,258.8 448.5,261.40000000000003 446.1,258.8" fill="#ff0000"/><text x="384.3" y="272.4" font-family='"DejaVu Serif","Liberation Serif",serif' font-size="13" font-weight="bold" fill="#000" textLength="65.5" lengthAdjust="spacingAndGlyphs">Brn1 /2 /4</text><path d="M271 314.5H307" stroke="#1e90ff" stroke-width="1.25" fill="none"/><polygon points="305.8,314.2 311,309.3 311,318.6" fill="#1e90ff"/><path d="M313 313.5V329.5H360" stroke="#1e90ff" stroke-width="3" fill="none"/><text x="312.8" y="347.7" font-family='"Liberation Serif",serif' font-size="16" font-weight="normal" fill="#000">VEGF</text><rect x="344" y="382" width="20" height="24" fill="#000"/><rect x="272" y="391" width="1.5" height="24" fill="#000"/><path d="M581.5 91V174.5H631.5V202 M671.5 91V107" stroke="#c86400" stroke-width="1.25" fill="none"/><polygon points="629.2,201.5 633.8,201.5 631.5,207" fill="#c86400"/><polygon points="669.2,106.8 673.8,106.8 671.5,112.3" fill="#c86400"/><path d="M621.5 114.5H676" stroke="#f4a0a0" stroke-width="3" fill="none"/><polygon points="646,116.0 648.4,118.6 646,121.19999999999999 643.6,118.6" fill="#ff0000"/><polygon points="675.7,116.0 678.1,118.6 675.7,121.19999999999999 673.3000000000001,118.6" fill="#ff0000"/><rect x="647.7" y="115.7" width="1" height="6" fill="#000"/><text x="627.6" y="132.6" font-family='"DejaVu Serif","Liberation Serif",serif' font-size="13" font-weight="bold" fill="#000" textLength="41.8" lengthAdjust="spacingAndGlyphs">1a 1b</text><text x="587.4" y="146.6" font-family='"DejaVu Serif","Liberation Serif",serif' font-size="13" font-weight="bold" fill="#000" textLength="93" lengthAdjust="spacingAndGlyphs">Blimp1 /Krox</text><path d="M676 174.5H636.5V202" stroke="#2aa7d1" stroke-width="1.25" fill="none"/><polygon points="634.2,201.5 638.8,201.5 636.5,207" fill="#2aa7d1"/><path d="M676 179.5H641.5V202" stroke="#f598a6" stroke-width="1.25" fill="none"/><polygon points="639.2,201.5 643.8,201.5 641.5,207" fill="#f598a6"/><path d="M626.5 209.5H666.5" stroke="#d070c8" stroke-width="3" fill="none"/><path d="M663.7 209V194.5H667" stroke="#d070c8" stroke-width="2.4" fill="none"/><polygon points="670.8,194 666,189.4 666,198.6" fill="#d070c8"/><path d="M672 194.5H676" stroke="#d070c8" stroke-width="1.25" fill="none"/><text x="584" y="227.8" font-family='"DejaVu Serif","Liberation Serif",serif' font-size="13" font-weight="bold" fill="#000" textLength="81" lengthAdjust="spacingAndGlyphs">Hox11 /13b</text><path d="M676 234.5H646.5V256.5 M643.2 256.5H649" stroke="#cc66bb" stroke-width="1.25" fill="none"/><path d="M621.5 259.5H661.7" stroke="#0a8035" stroke-width="3" fill="none"/><path d="M658.7 259V244.3H662" stroke="#0a8035" stroke-width="2.4" fill="none"/><polygon points="665.8,244 660.7,239.3 660.7,248.8" fill="#0a8035"/><path d="M667 244.3H676" stroke="#0a8035" stroke-width="3" fill="none"/><polygon points="658.5,261.0 660.9,263.6 658.5,266.20000000000005 656.1,263.6" fill="#ff0000"/><text x="621.8" y="277.3" font-family='"DejaVu Serif","Liberation Serif",serif' font-size="13" font-weight="bold" fill="#000" textLength="39.5" lengthAdjust="spacingAndGlyphs">GataE</text><path d="M676 284.5H586.5V367 M656.5 284V312" stroke="#2aa7d1" stroke-width="1.25" fill="none"/><polygon points="584.2,367.1 588.8,367.1 586.5,372.6" fill="#2aa7d1"/><polygon points="654.2,311.7 658.8,311.7 656.5,317.2" fill="#2aa7d1"/><path d="M676 289.5H591.5V367" stroke="#0a8035" stroke-width="1.25" fill="none"/><polygon points="589.2,367.1 593.8,367.1 591.5,372.6" fill="#0a8035"/><path d="M596.5 367V304.5H602" stroke="#00ffff" stroke-width="1.25" fill="none"/><polygon points="594.2,367.1 598.8,367.1 596.5,372.6" fill="#00ffff"/><polygon points="601,304.2 606.2,299.4 606.2,308.8" fill="#00ffff"/><path d="M608 303.7V319.5 M606.5 319.5H646.7" stroke="#00ffff" stroke-width="3" fill="none"/><path d="M651.3 319.5H676" stroke="#6cb82e" stroke-width="3" fill="none"/><polygon points="675.9,321.0 678.3,323.6 675.9,326.20000000000005 673.5,323.6" fill="#00ee00"/><polygon points="673.9000000000001,311.7 678.5,311.7 676.2,317.2" fill="#0a8035"/><text x="617" y="337.6" font-family='"DejaVu Serif","Liberation Serif",serif' font-size="13" font-weight="bold" fill="#000" textLength="29" lengthAdjust="spacingAndGlyphs">Tgif</text><text x="667.8" y="337.6" font-family='"DejaVu Serif","Liberation Serif",serif' font-size="13" font-weight="bold" fill="#000" textLength="23" lengthAdjust="spacingAndGlyphs">Bra</text><path d="M581.5 374.5H621.5" stroke="#000" stroke-width="3" fill="none"/><path d="M619 374V358.8H622" stroke="#000" stroke-width="2.4" fill="none"/><polygon points="625.9,358.8 620.7,354.3 620.7,363.4" fill="#000"/><polygon points="618.7,376.09999999999997 621.1,378.7 618.7,381.3 616.3000000000001,378.7" fill="#ff0000"/><text x="584.2" y="392.5" font-family='"DejaVu Serif","Liberation Serif",serif' font-size="13" font-weight="bold" fill="#000" textLength="37.3" lengthAdjust="spacingAndGlyphs">FoxA</text><rect x="589.6" y="402.1" width="90" height="14" fill="#000"/><text x="594.3" y="422.6" font-family='"DejaVu Sans","Liberation Sans",sans-serif' font-size="17.3" font-weight="normal" fill="#f5d5ab">Veg1 Endoderm</text></svg>
<div class="abs" style="left:675px;top:91px;width:16px;height:324px;background:#666"></div><div class="abs" style="left:676px;top:91px;width:14px;height:324px;background:#ccc"></div><div class="abs" style="left:676px;top:91px;width:14px;height:1px;background:#fff"></div><div class="abs" style="left:676px;top:91px;width:1px;height:15px;background:#fff"></div><div class="abs" style="left:676px;top:106px;width:14px;height:1px;background:#666"></div><svg class="abs" style="left:678px;top:95px" width="10" height="6"><polygon points="5,0.6 9.4,5 0.6,5" fill="#000"/></svg><div class="abs" style="left:676px;top:399px;width:14px;height:1px;background:#666"></div><div class="abs" style="left:676px;top:400px;width:14px;height:1px;background:#fff"></div><div class="abs" style="left:676px;top:400px;width:1px;height:15px;background:#fff"></div><svg class="abs" style="left:678px;top:405px" width="10" height="6"><polygon points="0.6,1 9.4,1 5,5.4" fill="#000"/></svg><div class="abs" style="left:676px;top:246px;width:14px;height:21px;background:#666699"></div><div class="abs" style="left:677px;top:247px;width:13px;height:19px;background:#ccccff"></div><div class="abs" style="left:678px;top:248px;width:12px;height:18px;background:#9999cc"></div><svg class="abs" style="left:679px;top:250px" width="9" height="14" shape-rendering="crispEdges"><defs><pattern id="bt" width="4" height="4" patternUnits="userSpaceOnUse"><rect x="0" y="0" width="1" height="1" fill="#ccccff"/><rect x="1" y="1" width="1" height="1" fill="#666699"/><rect x="2" y="2" width="1" height="1" fill="#ccccff"/><rect x="3" y="3" width="1" height="1" fill="#666699"/></pattern></defs><rect width="9" height="14" fill="url(#bt)"/></svg><div class="abs" style="left:271px;top:415px;width:420px;height:16px;background:#ccc"></div><div class="abs" style="left:271px;top:415px;width:404px;height:1px;background:#666"></div><div class="abs" style="left:271px;top:430px;width:404px;height:1px;background:#666"></div><div class="abs" style="left:271px;top:416px;width:404px;height:1px;background:#fff"></div><div class="abs" style="left:271px;top:416px;width:1px;height:14px;background:#fff"></div><div class="abs" style="left:286px;top:416px;width:1px;height:14px;background:#666"></div><div class="abs" style="left:287px;top:416px;width:1px;height:14px;background:#fff"></div><svg class="abs" style="left:275px;top:418px" width="6" height="10"><polygon points="0.6,5 5,0.6 5,9.4" fill="#000"/></svg><div class="abs" style="left:659px;top:416px;width:1px;height:14px;background:#666"></div><div class="abs" style="left:660px;top:416px;width:1px;height:14px;background:#fff"></div><svg class="abs" style="left:666px;top:418px" width="6" height="10"><polygon points="5.4,5 1,0.6 1,9.4" fill="#000"/></svg>
<div class="menu" style="left:349px;top:266px;width:227px;height:260px"><div class="abs" style="left:0;top:0;width:225px;height:1px;background:#fff"></div><div class="mi" style="top:2px;width:225px"><span>Experimental Data</span></div><div class="sep" style="top:21px;width:225px"></div><div class="mi" style="top:23px;width:225px"><span>Show Parallel Paths for Source</span><svg class="abs" style="left:214px;top:4.1px" width="6" height="10"><polygon points="0,0.2 4.6,4.7 0,9.2" fill="#000"/></svg></div><div class="mi dis" style="top:42px;width:225px"><span>Show Paths from QPCR Sources</span><svg class="abs" style="left:214px;top:4.1px" width="6" height="10"><polygon points="0,0.2 4.6,4.7 0,9.2" fill="#999"/></svg></div><div class="mi" style="top:61px;width:225px"><span>Select Sources</span></div><div class="mi dis" style="top:80px;width:225px"><span>Select Targets</span></div><div class="sep" style="top:99px;width:225px"></div><div class="mi" style="top:101px;width:225px"><span>Properties...</span></div><div class="mi dis" style="top:120px;width:225px"><span>Simulation Properties...</span></div><div class="sep" style="top:139px;width:225px"></div><div class="mi" style="top:141px;width:225px"><span>Change Node Type...</span></div><div class="mi sel" style="top:160px;width:225px"><span>Edit Subregion Membership</span><svg class="abs" style="left:215px;top:3.1px" width="6" height="10"><polygon points="0,0.2 4.6,4.7 0,9.2" fill="#000"/></svg></div><div class="mi" style="top:179px;width:225px"><span>Delete</span></div><div class="sep" style="top:198px;width:225px"></div><div class="mi" style="top:200px;width:225px"><span>Manage QPCR Data</span><svg class="abs" style="left:214px;top:4.1px" width="6" height="10"><polygon points="0,0.2 4.6,4.7 0,9.2" fill="#000"/></svg></div><div class="mi" style="top:219px;width:225px"><span>Manage Time Course Data</span><svg class="abs" style="left:214px;top:4.1px" width="6" height="10"><polygon points="0,0.2 4.6,4.7 0,9.2" fill="#000"/></svg></div><div class="mi" style="top:238px;width:225px"><span>Manage Temporal Input Data</span><svg class="abs" style="left:214px;top:4.1px" width="6" height="10"><polygon points="0,0.2 4.6,4.7 0,9.2" fill="#000"/></svg></div></div><div class="menu" style="left:571px;top:424px;width:183px;height:43px"><div class="abs" style="left:0;top:0;width:181px;height:1px;background:#fff"></div><div class="mi sel" style="top:2px;width:181px"><span>Add To Subregion</span><svg class="abs" style="left:171px;top:3.1px" width="6" height="10"><polygon points="0,0.2 4.6,4.7 0,9.2" fill="#000"/></svg></div><div class="mi" style="top:21px;width:181px"><span>Remove From Subregion</span><svg class="abs" style="left:170px;top:4.1px" width="6" height="10"><polygon points="0,0.2 4.6,4.7 0,9.2" fill="#000"/></svg></div></div><div class="menu" style="left:749px;top:424px;width:95px;height:24px"><div class="abs" style="left:0;top:0;width:93px;height:1px;background:#fff"></div><div class="mi" style="top:2px;width:93px"><span>Mesoderm</span></div></div>
</body></html>
